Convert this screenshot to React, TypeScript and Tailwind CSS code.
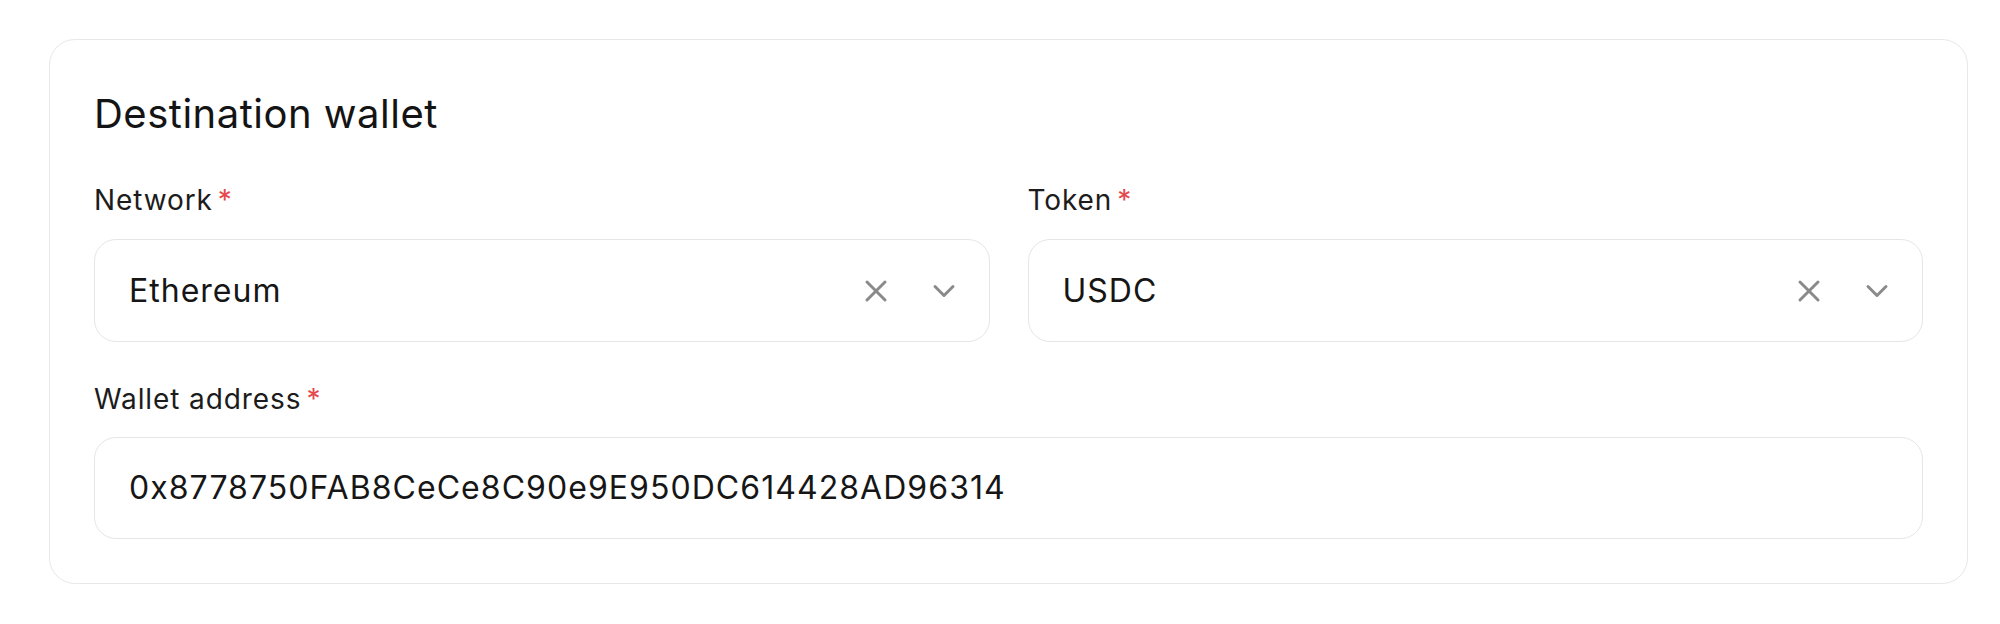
import React from "react";

const font = { fontFamily: "Inter, 'Noto Sans', sans-serif" };

function XIcon() {
  return (
    <svg width="36" height="36" viewBox="0 0 24 24" fill="none" stroke="#8a8a8a" strokeWidth="2" strokeLinecap="round" strokeLinejoin="round">
      <path d="M18 6 6 18" />
      <path d="m6 6 12 12" />
    </svg>
  );
}

function ChevronIcon() {
  return (
    <svg width="36" height="36" viewBox="0 0 24 24" fill="none" stroke="#8a8a8a" strokeWidth="2" strokeLinecap="round" strokeLinejoin="round">
      <path d="m6 9 6 6 6-6" />
    </svg>
  );
}

function Label({ children }: { children: React.ReactNode }) {
  return (
    <div className="flex items-start text-[28px] leading-[40px] tracking-[0.9px] text-[#1c1c1c]">
      <span>{children}</span>
      <span className="ml-[5px] text-[#e5484d]">*</span>
    </div>
  );
}

function Select({ value }: { value: string }) {
  return (
    <div className="flex h-[103px] items-center rounded-[22px] border border-[#e6e6e6] bg-white pl-[34px] pr-[27px]">
      <span className="flex-1 text-[32px] tracking-[1px] text-[#161616]">{value}</span>
      <div className="flex items-center gap-[32px]">
        <XIcon />
        <ChevronIcon />
      </div>
    </div>
  );
}

export default function App() {
  return (
    <div className="h-[624px] w-[2000px] bg-white pl-[49px] pr-[32px] pt-[39px]" style={font}>
      <div className="rounded-[26px] border border-[#e8e8e8] bg-white px-[44px] pb-[44px] pt-[50px]">
        <h2 className="text-[40px] font-normal leading-[48px] tracking-[0.5px] text-[#141414]">Destination wallet</h2>
        <div className="mt-[42px] grid grid-cols-2 gap-[38px]">
          <div>
            <Label>Network</Label>
            <div className="mt-[19px]">
              <Select value="Ethereum" />
            </div>
          </div>
          <div>
            <Label>Token</Label>
            <div className="mt-[19px]">
              <Select value="USDC" />
            </div>
          </div>
        </div>
        <div className="mt-[37px]">
          <Label>Wallet address</Label>
          <div className="mt-[18px] flex h-[102px] items-center rounded-[22px] border border-[#e6e6e6] bg-white pl-[34px]">
            <span className="text-[32px] tracking-[1.05px] text-[#161616]">0x8778750FAB8CeCe8C90e9E950DC614428AD96314</span>
          </div>
        </div>
      </div>
    </div>
  );
}
